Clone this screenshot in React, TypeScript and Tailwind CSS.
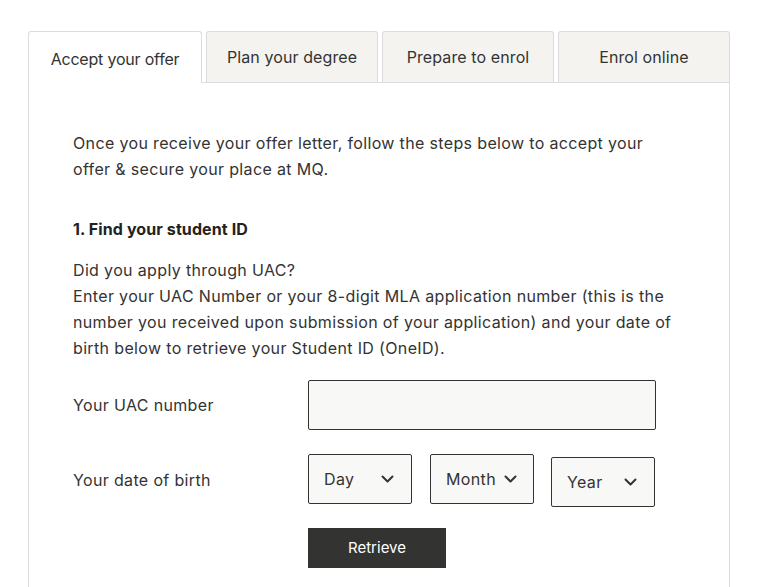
const font = { fontFamily: 'Inter, "Open Sans", sans-serif' };

function Chevron() {
  return (
    <svg width="13" height="8" viewBox="0 0 13 8" className="shrink-0" fill="none">
      <path d="M1.5 1.5 L6.5 6.5 L11.5 1.5" stroke="#333" strokeWidth="2" strokeLinecap="round" strokeLinejoin="round" />
    </svg>
  );
}

function Tab({ label, active }: { label: string; active?: boolean }) {
  if (active) {
    return (
      <div className="relative -mb-px flex h-[52px] w-[174px] items-center justify-center rounded-t-[3px] border border-b-0 border-[#dcdcda] bg-white pt-[3px] text-[16px] tracking-[-0.2px] text-[#333]">
        {label}
      </div>
    );
  }
  return (
    <div className="flex h-[51px] w-[172px] items-center justify-center rounded-t-[3px] border border-b-0 border-[#dcdcda] bg-[#f4f3f0] text-[16px] tracking-[0.1px] text-[#333]">
      {label}
    </div>
  );
}

function Select({ label, className = "" }: { label: string; className?: string }) {
  return (
    <div
      className={`flex h-[50px] w-[104px] items-center justify-between rounded-[2px] border border-[#333] bg-[#f8f8f6] pl-[15px] pr-[17px] text-[16px] text-[#333] ${className}`}
    >
      <span>{label}</span>
      <Chevron />
    </div>
  );
}

export default function App() {
  return (
    <div className="min-h-screen bg-white pl-[28px] pt-[31px]" style={font}>
      <div className="w-[702px]">
        {/* tabs */}
        <div className="flex items-end gap-1 border-b border-[#dcdcda]">
          <Tab label="Accept your offer" active />
          <Tab label="Plan your degree" />
          <Tab label="Prepare to enrol" />
          <Tab label="Enrol online" />
        </div>

        {/* panel */}
        <div className="h-[520px] border-x border-[#dcdcda] pl-[44px] pr-[52px] pt-[47px] text-[16px] leading-[26px] tracking-[0.35px] text-[#333]">
          <p>
            Once you receive your offer letter, follow the steps below to accept your offer &amp; secure
            your place at MQ.
          </p>

          <h3 className="mt-[35px] text-[16px] font-bold leading-[24px] tracking-[0.1px] text-[#222]">
            1. Find your student ID
          </h3>

          <p className="mt-[16px]">
            Did you apply through UAC?
            <br />
            Enter your UAC Number or your 8-digit MLA application number (this is the number you received upon
            submission of your application) and your date of birth below to retrieve your Student ID (OneID).
          </p>

          <div className="mt-[19px] flex items-center">
            <div className="w-[235px]">Your UAC number</div>
            <div className="h-[50px] w-[348px] rounded-[2px] border border-[#333] bg-[#f8f8f6]" />
          </div>

          <div className="mt-[24px] flex items-start">
            <div className="flex h-[50px] w-[235px] items-center pt-[2px]">Your date of birth</div>
            <div className="flex items-start">
              <Select label="Day" />
              <Select label="Month" className="ml-[18px] !justify-start gap-[8px] !pr-[12px]" />
              <Select label="Year" className="ml-[17px] mt-[3px]" />
            </div>
          </div>

          <div className="ml-[235px] mt-[21px]">
            <button className="h-[40px] w-[138px] bg-[#333331] text-[15px] tracking-normal text-white">Retrieve</button>
          </div>
        </div>
      </div>
    </div>
  );
}
